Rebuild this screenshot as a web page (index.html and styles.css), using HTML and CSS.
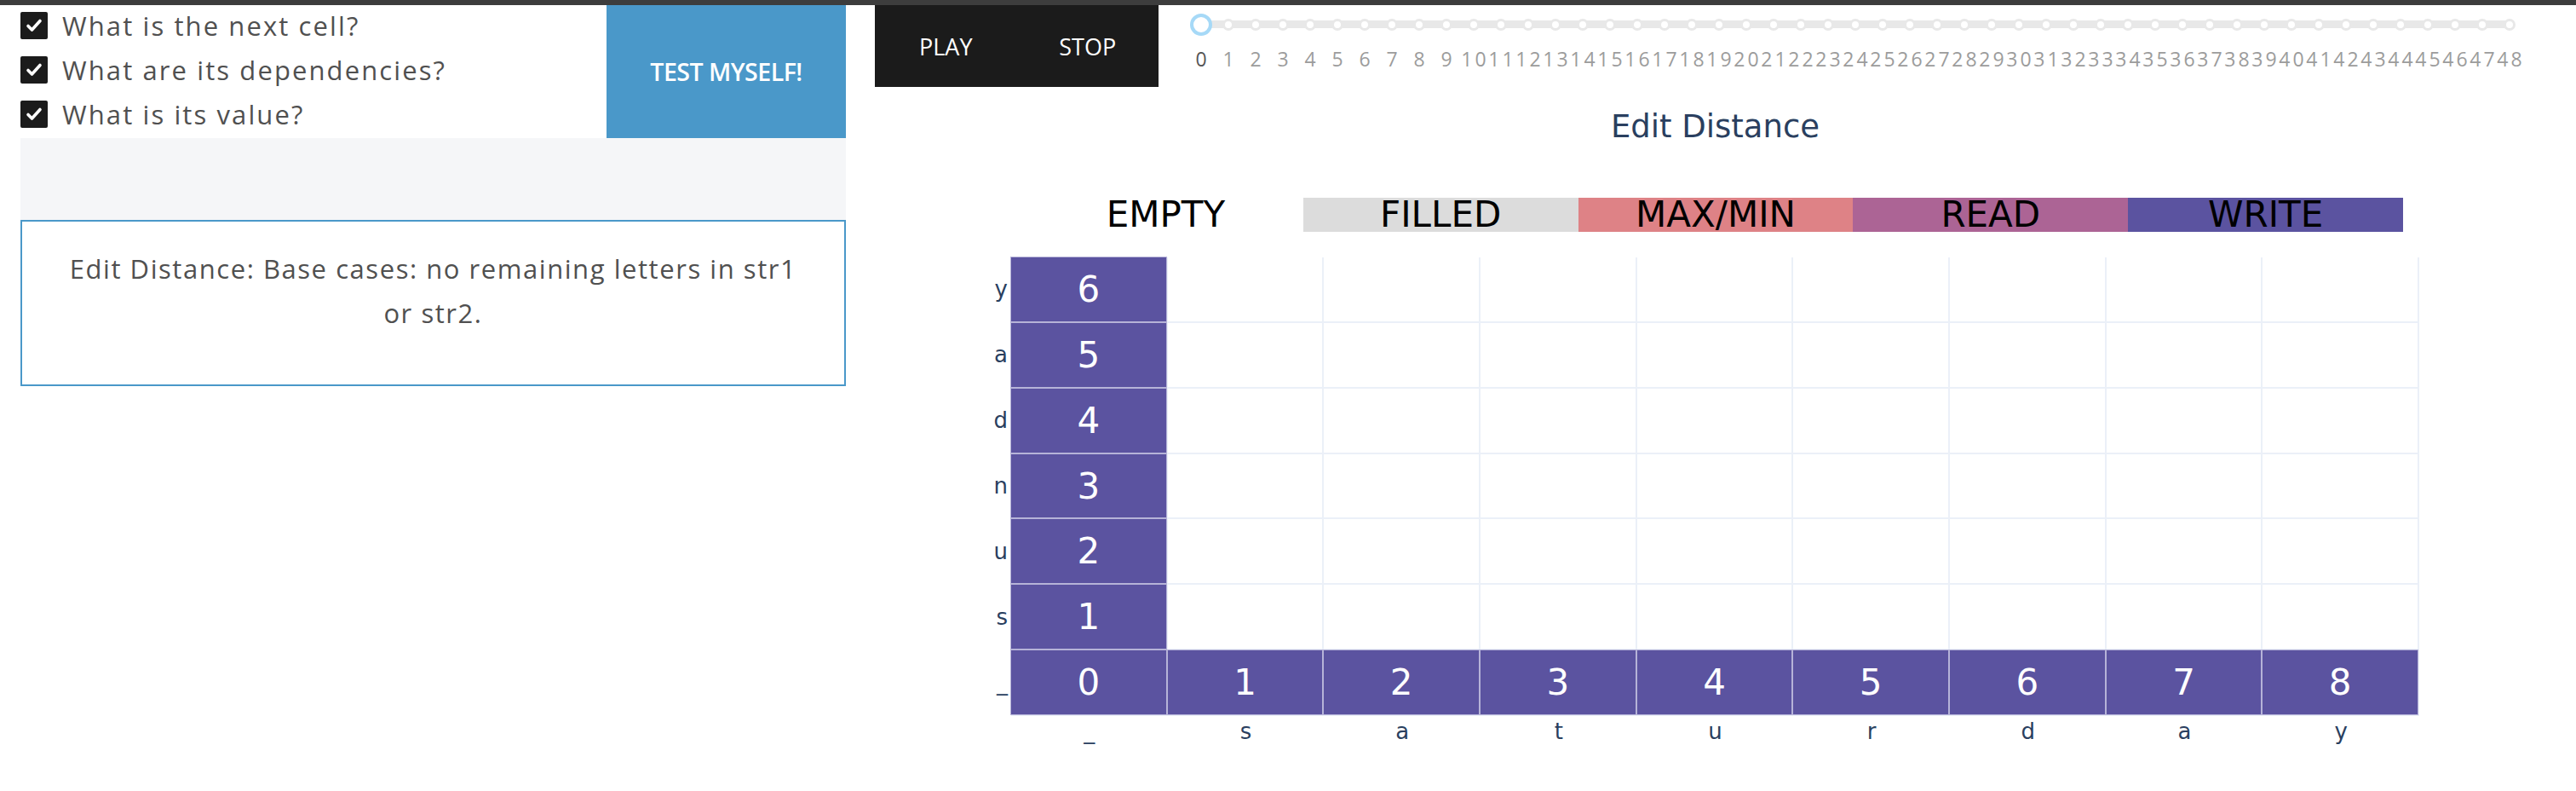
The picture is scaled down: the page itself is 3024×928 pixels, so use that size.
FILE: index.html
```html
<!DOCTYPE html>
<html lang="en">
<head>
<meta charset="utf-8">
<title>Edit Distance</title>
<link rel="stylesheet" href="styles.css">
</head>
<body>
<div class="topbar"></div>
<div class="page">
  <div class="left">
    <div class="quiz">
      <div class="questions">
        <label class="q"><span class="cb"><svg viewBox="0 0 32 32" width="32" height="32"><path d="M9 16.5 L13.5 21 L23 10.5" fill="none" stroke="#fff" stroke-width="3.6" stroke-linecap="round" stroke-linejoin="round"/></svg></span>What is the next cell?</label>
        <label class="q"><span class="cb"><svg viewBox="0 0 32 32" width="32" height="32"><path d="M9 16.5 L13.5 21 L23 10.5" fill="none" stroke="#fff" stroke-width="3.6" stroke-linecap="round" stroke-linejoin="round"/></svg></span>What are its dependencies?</label>
        <label class="q"><span class="cb"><svg viewBox="0 0 32 32" width="32" height="32"><path d="M9 16.5 L13.5 21 L23 10.5" fill="none" stroke="#fff" stroke-width="3.6" stroke-linecap="round" stroke-linejoin="round"/></svg></span>What is its value?</label>
      </div>
      <button class="test">TEST MYSELF!</button>
    </div>
    <div class="spacer"></div>
    <div class="desc">Edit Distance: Base cases: no remaining letters in str1 or str2.</div>
  </div>

  <div class="right">
    <div class="controls">
      <div class="playstop"><button class="pbtn">PLAY</button><button class="pbtn">STOP</button></div>
      <div class="slider">
        <div class="track">
          <span class="slot"><span class="dot active"></span></span>
          <span class="slot"><span class="dot"></span></span><span class="slot"><span class="dot"></span></span><span class="slot"><span class="dot"></span></span><span class="slot"><span class="dot"></span></span><span class="slot"><span class="dot"></span></span><span class="slot"><span class="dot"></span></span><span class="slot"><span class="dot"></span></span><span class="slot"><span class="dot"></span></span><span class="slot"><span class="dot"></span></span><span class="slot"><span class="dot"></span></span>
          <span class="slot"><span class="dot"></span></span><span class="slot"><span class="dot"></span></span><span class="slot"><span class="dot"></span></span><span class="slot"><span class="dot"></span></span><span class="slot"><span class="dot"></span></span><span class="slot"><span class="dot"></span></span><span class="slot"><span class="dot"></span></span><span class="slot"><span class="dot"></span></span><span class="slot"><span class="dot"></span></span><span class="slot"><span class="dot"></span></span>
          <span class="slot"><span class="dot"></span></span><span class="slot"><span class="dot"></span></span><span class="slot"><span class="dot"></span></span><span class="slot"><span class="dot"></span></span><span class="slot"><span class="dot"></span></span><span class="slot"><span class="dot"></span></span><span class="slot"><span class="dot"></span></span><span class="slot"><span class="dot"></span></span><span class="slot"><span class="dot"></span></span><span class="slot"><span class="dot"></span></span>
          <span class="slot"><span class="dot"></span></span><span class="slot"><span class="dot"></span></span><span class="slot"><span class="dot"></span></span><span class="slot"><span class="dot"></span></span><span class="slot"><span class="dot"></span></span><span class="slot"><span class="dot"></span></span><span class="slot"><span class="dot"></span></span><span class="slot"><span class="dot"></span></span><span class="slot"><span class="dot"></span></span><span class="slot"><span class="dot"></span></span>
          <span class="slot"><span class="dot"></span></span><span class="slot"><span class="dot"></span></span><span class="slot"><span class="dot"></span></span><span class="slot"><span class="dot"></span></span><span class="slot"><span class="dot"></span></span><span class="slot"><span class="dot"></span></span><span class="slot"><span class="dot"></span></span><span class="slot"><span class="dot"></span></span>
        </div>
        <div class="ticks">
          <span class="tick current">0</span><span class="tick">1</span><span class="tick">2</span><span class="tick">3</span><span class="tick">4</span><span class="tick">5</span><span class="tick">6</span><span class="tick">7</span><span class="tick">8</span><span class="tick">9</span><span class="tick">10</span><span class="tick">11</span><span class="tick">12</span><span class="tick">13</span><span class="tick">14</span><span class="tick">15</span><span class="tick">16</span><span class="tick">17</span><span class="tick">18</span><span class="tick">19</span><span class="tick">20</span><span class="tick">21</span><span class="tick">22</span><span class="tick">23</span><span class="tick">24</span><span class="tick">25</span><span class="tick">26</span><span class="tick">27</span><span class="tick">28</span><span class="tick">29</span><span class="tick">30</span><span class="tick">31</span><span class="tick">32</span><span class="tick">33</span><span class="tick">34</span><span class="tick">35</span><span class="tick">36</span><span class="tick">37</span><span class="tick">38</span><span class="tick">39</span><span class="tick">40</span><span class="tick">41</span><span class="tick">42</span><span class="tick">43</span><span class="tick">44</span><span class="tick">45</span><span class="tick">46</span><span class="tick">47</span><span class="tick">48</span>
        </div>
      </div>
    </div>

    <div class="chart">
      <div class="title">Edit Distance</div>
      <div class="legend">
        <div class="lg empty">EMPTY</div>
        <div class="lg filled">FILLED</div>
        <div class="lg maxmin">MAX/MIN</div>
        <div class="lg read">READ</div>
        <div class="lg write">WRITE</div>
      </div>
      <div class="plot">
        <div class="ylabels">
          <span>y</span><span>a</span><span>d</span><span>n</span><span>u</span><span>s</span><span>_</span>
        </div>
        <div class="grid">
          <div class="cell w">6</div><div class="cell"></div><div class="cell"></div><div class="cell"></div><div class="cell"></div><div class="cell"></div><div class="cell"></div><div class="cell"></div><div class="cell"></div>
          <div class="cell w">5</div><div class="cell"></div><div class="cell"></div><div class="cell"></div><div class="cell"></div><div class="cell"></div><div class="cell"></div><div class="cell"></div><div class="cell"></div>
          <div class="cell w">4</div><div class="cell"></div><div class="cell"></div><div class="cell"></div><div class="cell"></div><div class="cell"></div><div class="cell"></div><div class="cell"></div><div class="cell"></div>
          <div class="cell w">3</div><div class="cell"></div><div class="cell"></div><div class="cell"></div><div class="cell"></div><div class="cell"></div><div class="cell"></div><div class="cell"></div><div class="cell"></div>
          <div class="cell w">2</div><div class="cell"></div><div class="cell"></div><div class="cell"></div><div class="cell"></div><div class="cell"></div><div class="cell"></div><div class="cell"></div><div class="cell"></div>
          <div class="cell w">1</div><div class="cell"></div><div class="cell"></div><div class="cell"></div><div class="cell"></div><div class="cell"></div><div class="cell"></div><div class="cell"></div><div class="cell"></div>
          <div class="cell w">0</div><div class="cell w">1</div><div class="cell w">2</div><div class="cell w">3</div><div class="cell w">4</div><div class="cell w">5</div><div class="cell w">6</div><div class="cell w">7</div><div class="cell w">8</div>
        </div>
      </div>
      <div class="xlabels">
        <span>_</span><span>s</span><span>a</span><span>t</span><span>u</span><span>r</span><span>d</span><span>a</span><span>y</span>
      </div>
    </div>
  </div>
</div>
</body>
</html>
```

FILE: styles.css
```css
* { box-sizing: border-box; }

body {
  margin: 0;
  background: #ffffff;
  font-family: "Open Sans", "Noto Sans", sans-serif;
}

.topbar {
  height: 6px;
  background: #3d3d3d;
}

.page {
  display: flex;
  align-items: flex-start;
  padding-left: 24px;
  gap: 34px;
}

/* ---------- left panel ---------- */
.left {
  width: 969px;
  flex: none;
  display: flex;
  flex-direction: column;
}

.quiz {
  display: flex;
  height: 156px;
}

.questions {
  width: 688px;
  display: flex;
  flex-direction: column;
  gap: 4px;
}

.q {
  height: 48px;
  display: flex;
  align-items: center;
  gap: 17px;
  font-size: 31px;
  letter-spacing: 2.1px;
  color: #505050;
}

.cb {
  width: 32px;
  height: 32px;
  flex: none;
  background: #1b1b1b;
  border-radius: 2px;
  display: flex;
}

.test {
  width: 281px;
  height: 156px;
  border: none;
  background: #4a98c9;
  color: #ffffff;
  font-family: "Open Sans", sans-serif;
  font-weight: 600;
  font-size: 28.5px;
  letter-spacing: -0.5px;
  padding: 0;
}

.spacer {
  height: 96px;
  background: #f5f6f8;
}

.desc {
  height: 195px;
  border: 2px solid #4a98c9;
  padding: 29px 38px 0;
  text-align: center;
  font-size: 31px;
  line-height: 52px;
  letter-spacing: 1.55px;
  color: #505050;
}

/* ---------- right panel ---------- */
.right {
  flex: 1;
  display: flex;
  flex-direction: column;
}

.controls {
  display: flex;
  height: 96px;
}

.playstop {
  width: 333px;
  height: 96px;
  background: #1b1b1b;
  display: flex;
}

.pbtn {
  flex: 1;
  border: none;
  background: transparent;
  color: #ffffff;
  font-family: "Open Sans", sans-serif;
  font-size: 27px;
  padding: 0;
}

.slider {
  margin-left: 34px;
  display: flex;
  flex-direction: column;
}

.track {
  display: flex;
  height: 45px;
  background-image: linear-gradient(#e8e8e8, #e8e8e8);
  background-repeat: no-repeat;
  background-size: calc(100% - 32px) 9px;
  background-position: 16px center;
}

.slot {
  width: 32px;
  flex: none;
  display: flex;
  align-items: center;
  justify-content: center;
}

.dot {
  width: 14px;
  height: 14px;
  border-radius: 50%;
  background: #ffffff;
  border: 3px solid #e8e8e8;
}

.dot.active {
  width: 26px;
  height: 26px;
  border: 4px solid #a6d9f7;
}

.ticks {
  display: flex;
  line-height: 36px;
}

.tick {
  width: 32px;
  flex: none;
  display: flex;
  justify-content: center;
  white-space: nowrap;
  font-size: 23px;
  letter-spacing: 3px;
  text-indent: 3px;
  color: #9c9c9c;
}

.tick.current {
  color: #555555;
}

/* ---------- chart ---------- */
.chart {
  display: flex;
  flex-direction: column;
  font-family: "DejaVu Sans", Verdana, sans-serif;
}

.title {
  margin-top: 26px;
  margin-left: 160px;
  width: 1653px;
  text-align: center;
  font-size: 37px;
  line-height: 42px;
  color: #2a3f5f;
}

.legend {
  margin-top: 62px;
  margin-left: 180px;
  display: grid;
  grid-template-columns: repeat(5, 322.8px);
  height: 40px;
}

.lg {
  text-align: center;
  font-size: 42px;
  line-height: 40px;
  color: #000000;
  white-space: nowrap;
}

.lg.empty { background: #ffffff; }
.lg.filled { background: #dcdcdc; }
.lg.maxmin { background: #de8286; }
.lg.read { background: #ac6495; }
.lg.write { background: #5b53a0; }

.plot {
  margin-top: 30px;
  display: flex;
  margin-left: 100px;
}

.ylabels {
  width: 60px;
  display: grid;
  grid-template-rows: repeat(7, 74.86px);
  row-gap: 2px;
  padding-right: 4px;
}

.ylabels span {
  display: flex;
  align-items: center;
  justify-content: flex-end;
  font-size: 26px;
  color: #2a3f5f;
}

.grid {
  width: 1653px;
  display: grid;
  grid-template-columns: repeat(9, 1fr);
  grid-template-rows: repeat(7, 74.86px);
  gap: 2px;
  padding: 0 2px 2px 0;
  background: #ebf0f8;
}

.cell {
  background: #ffffff;
  display: flex;
  align-items: center;
  justify-content: center;
  font-size: 42px;
  color: #ffffff;
}

.cell.w {
  background: #5b53a0;
  box-shadow: 0 0 0 1px #b6b3d8;
}

.xlabels {
  margin-left: 160px;
  width: 1653px;
  margin-top: 3px;
  display: grid;
  grid-template-columns: repeat(9, 1fr);
  font-size: 26px;
  line-height: 30px;
  color: #2a3f5f;
  text-align: center;
}
```
